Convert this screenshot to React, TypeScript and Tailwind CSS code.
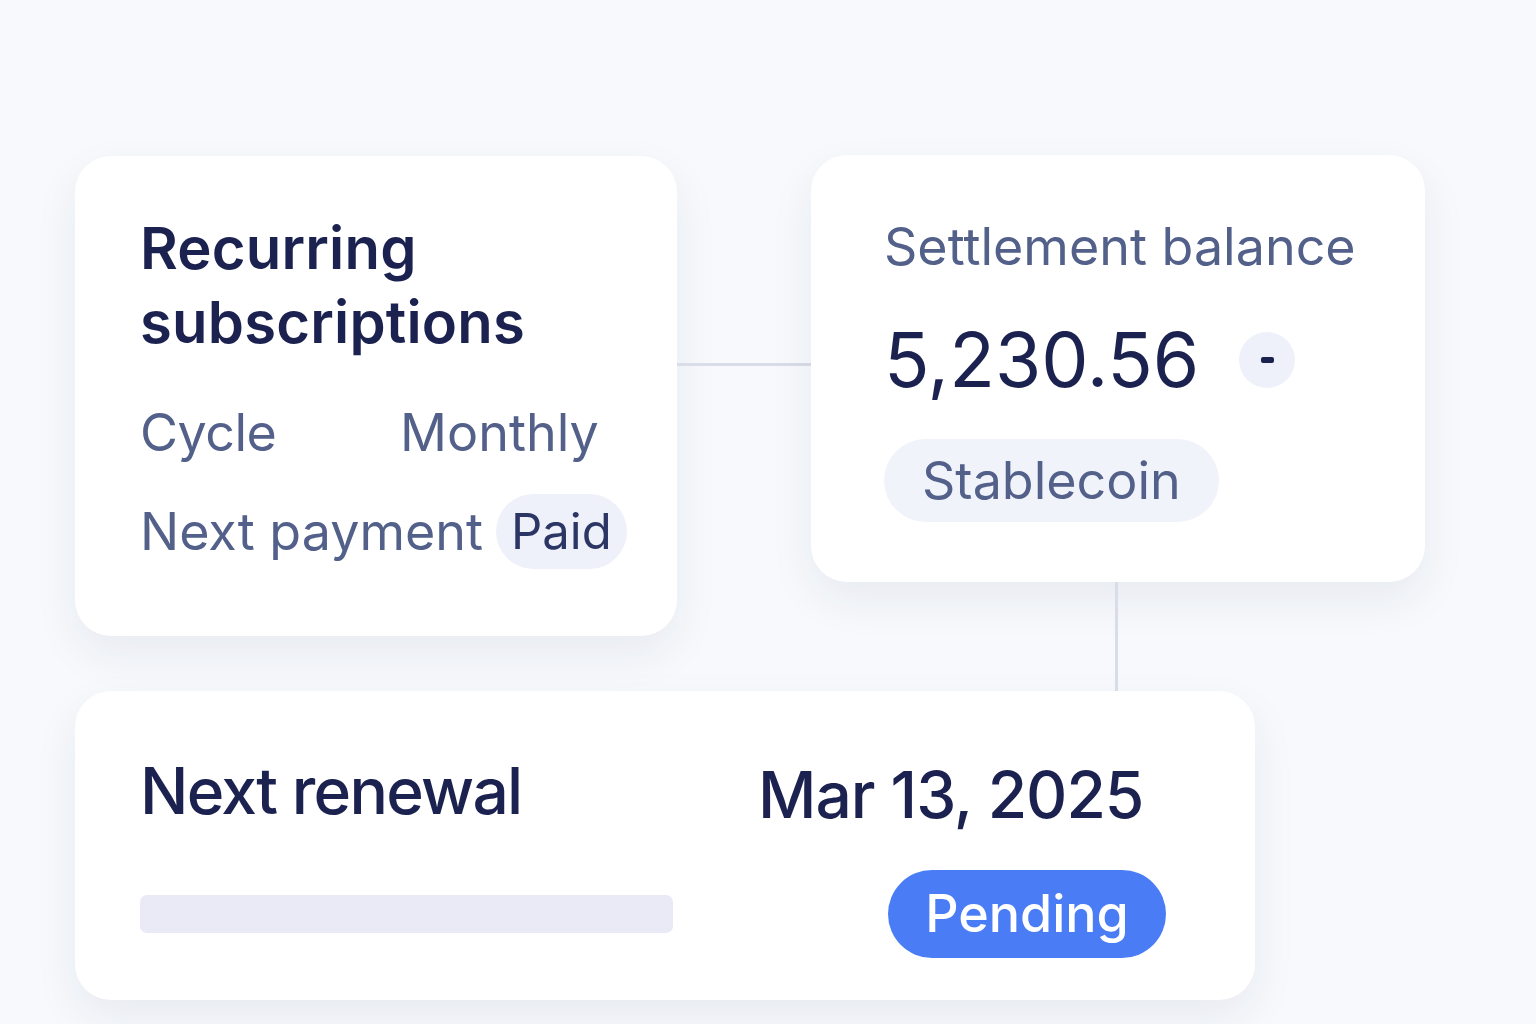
import React from "react";

export default function App() {
  return (
    <div
      className="w-[1536px] h-[1024px] overflow-hidden bg-[#f7f9fc] pl-[75px] pt-[155px]"
      style={{ fontFamily: "Inter, Roboto, 'Noto Sans', sans-serif" }}
    >
      <div className="flex items-start">
        {/* Card 1 */}
        <div className="mt-[1px] w-[602px] h-[480px] rounded-[36px] bg-white shadow-[0_18px_45px_rgba(30,40,80,0.07)] pl-[65px] pt-[55px] pb-[67px]">
          <div className="text-[58px] leading-[74px] font-semibold text-[#1b2250] tracking-[0.2px]">
            Recurring
            <br />
            subscriptions
          </div>
          <div className="mt-[42px] grid grid-cols-[260px_auto] text-[52px] leading-[64px] text-[#53618a]">
            <span className="tracking-[-0.5px]">Cycle</span>
            <span>Monthly</span>
          </div>
          <div className="mt-[29px] flex items-center gap-[13px]">
            <span className="text-[52px] leading-[64px] text-[#53618a]">Next payment</span>
            <span className="h-[75px] px-[15px] flex items-center rounded-full bg-[#eff1fa] text-[49px] text-[#2b3664]">
              Paid
            </span>
          </div>
        </div>

        {/* horizontal connector */}
        <div className="mt-[208px] w-[134px] h-[3px] bg-[#d9dde7]" />

        {/* Card 2 column */}
        <div className="flex flex-col">
          <div className="w-[614px] h-[427px] rounded-[36px] bg-white shadow-[0_18px_45px_rgba(30,40,80,0.07)] pl-[73px] pt-[60px]">
            <div className="text-[52px] leading-[64px] text-[#53618a]">Settlement balance</div>
            <div className="mt-[41px] flex items-center gap-[40px]">
              <span className="text-[75px] leading-[80px] text-[#1b2250]">5,230.56</span>
              <span className="w-[56px] h-[56px] rounded-full bg-[#eef0fa] flex items-center justify-center">
                <span className="block w-[13px] h-[6px] rounded-[2px] bg-[#1b2250]" />
              </span>
            </div>
            <div className="mt-[39px] inline-flex h-[83px] items-center rounded-full bg-[#f1f3fb] px-[38px] text-[52px] text-[#53618a]">
              Stablecoin
            </div>
          </div>
          <div className="ml-[304px] w-[3px] h-[109px] bg-[#d9dde7]" />
        </div>
      </div>

      {/* Card 3 */}
      <div className="w-[1180px] h-[309px] rounded-[36px] bg-white shadow-[0_18px_45px_rgba(30,40,80,0.07)] pl-[65px] pt-[68px]">
        <div className="grid grid-cols-[618px_auto] items-start">
          <span className="text-[64px] leading-[64px] font-medium text-[#1b2250] tracking-[-1.7px]">Next renewal</span>
          <span className="mt-[4px] text-[64px] leading-[64px] font-medium text-[#1b2250] tracking-[-1px]">
            Mar 13, 2025
          </span>
        </div>
        <div className="mt-[43px] grid grid-cols-[618px_auto] items-center">
          <div className="w-[533px] h-[38px] rounded-[7px] bg-[#e9eaf5]" />
          <div className="ml-[130px] inline-flex w-[278px] h-[88px] items-center justify-center rounded-full bg-[#4a7cf6] text-[52px] font-medium text-white">
            Pending
          </div>
        </div>
      </div>
    </div>
  );
}
